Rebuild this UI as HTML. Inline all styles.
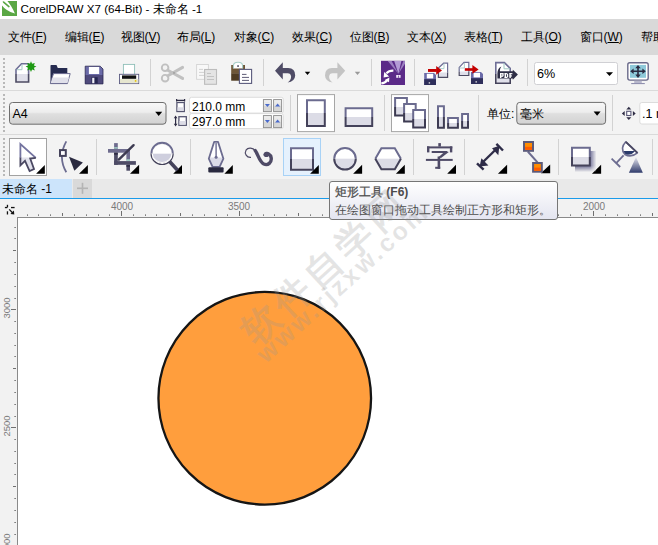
<!DOCTYPE html>
<html><head><meta charset="utf-8">
<style>
*{box-sizing:border-box}
html,body{margin:0;padding:0;width:658px;height:545px;overflow:hidden;background:#fff;font-family:"Liberation Sans",sans-serif}
.a{position:absolute}
.t{position:absolute;white-space:nowrap;font-size:12px;line-height:14px;color:#000}
.grip{position:absolute;width:2px;background:repeating-linear-gradient(to bottom,#b8b8b8 0 2px,transparent 2px 4px)}
.rn{position:absolute;white-space:nowrap;font-size:10px;line-height:10px;color:#7a7a7a}
u{text-decoration:underline;text-underline-offset:1px}
svg{position:absolute;left:0;top:0}
</style></head><body>
<!-- backgrounds -->
<div class="a" style="left:0;top:0;width:658px;height:19px;background:#fff"></div>
<div class="a" style="left:0;top:19px;width:658px;height:36px;background:#d9d9d9"></div>
<div class="a" style="left:0;top:55px;width:658px;height:35px;background:#f3f3f3"></div>
<div class="a" style="left:0;top:90px;width:658px;height:1px;background:#dadada"></div>
<div class="a" style="left:0;top:91px;width:658px;height:43px;background:#f3f3f3"></div>
<div class="a" style="left:0;top:134px;width:658px;height:1px;background:#dadada"></div>
<div class="a" style="left:0;top:135px;width:658px;height:44px;background:#f3f3f3"></div>
<div class="a" style="left:0;top:179px;width:658px;height:19px;background:#e9e9e9"></div>
<div class="a" style="left:0;top:179px;width:72px;height:19px;background:#cce4fb"></div>
<div class="a" style="left:73px;top:179px;width:19px;height:19px;background:#d9d9d9"></div>
<div class="a" style="left:0;top:198px;width:658px;height:1px;background:#1a9bea"></div>
<div class="a" style="left:0;top:199px;width:658px;height:346px;background:#f2f2f2"></div>
<div class="a" style="left:17px;top:217px;width:641px;height:328px;background:#fff;border-left:1px solid #8a8a8a;border-top:1px solid #8a8a8a"></div>
<div class="grip" style="left:3px;top:58px;height:30px"></div>
<div class="grip" style="left:3px;top:94px;height:38px"></div>
<div class="grip" style="left:3px;top:138px;height:38px"></div>
<svg width="658" height="545" viewBox="0 0 658 545">
<!-- grip handled in html -->
<!-- separators tb1 -->
<g fill="#d2d2d2">
<rect x="150" y="59" width="1" height="27"/>
<rect x="263" y="59" width="1" height="27"/>
<rect x="371" y="59" width="1" height="27"/>
<rect x="414" y="59" width="1" height="27"/>
<rect x="527" y="59" width="1" height="27"/>
</g>
<!-- new doc -->
<path d="M21.5,63.8 H28.6 V82 H16 V69.5 Z" fill="#fff"/>
<rect x="16" y="74" width="12.6" height="8" fill="#e0e0ea"/>
<path d="M16,74 V69.5 L21.5,63.8 H28.6 V74" fill="none" stroke="#6e6e96" stroke-width="1.6"/>
<path d="M16,74 V82 H28.6 V74" fill="none" stroke="#4d4b63" stroke-width="1.6"/>
<path d="M16.8,69.7 H22 V64.5" fill="none" stroke="#a6cbc6" stroke-width="1"/>
<polygon points="31,61.2 32.1,63.8 34.8,62.9 33.9,65.6 36.4,66.6 33.9,67.8 34.8,70.4 32.1,69.5 31,72 29.9,69.5 27.2,70.4 28.1,67.8 25.6,66.6 28.1,65.6 27.2,62.9 29.9,63.8" fill="#1f9a14"/>
<!-- open folder -->
<path d="M50.5,83.8 V65.5 Q50.5,64.9 51.2,64.9 H56.5 L57.8,67.9 H67.3 V83.8 Z" fill="#262b50"/>
<path d="M53.5,73.6 H70.2 L67.4,83.6 H50.3 Z" fill="#fff" stroke="#6a6a90" stroke-width="1"/>
<path d="M52.6,77.5 H69.1 L67.4,83.1 H51 Z" fill="#e0e0ea"/>
<!-- save -->
<path d="M85.2,66.2 H100.2 L103,69 V83.9 H85.2 Z" fill="#6a6aa8"/>
<rect x="85.2" y="75" width="17.8" height="8.9" fill="#4f4a7c"/>
<path d="M85.2,66.2 H100.2 L103,69 V83.9 H85.2 Z" fill="none" stroke="#2c2a52" stroke-width="0.8"/>
<rect x="88.9" y="67" width="10.3" height="7" fill="#fff"/>
<rect x="91.5" y="77.2" width="6.2" height="6.4" fill="#262650"/>
<rect x="92.2" y="77.8" width="2.2" height="5.4" fill="#f0f0f8"/>
<!-- print -->
<rect x="123.4" y="64.4" width="11.2" height="11.6" fill="#fff" stroke="#8fbfb8" stroke-width="0.9"/>
<rect x="119.5" y="74.3" width="19.2" height="9.3" fill="#fff" stroke="#5a5a80" stroke-width="0.9"/>
<rect x="122" y="75.4" width="14.2" height="3.4" fill="#111"/>
<rect x="120" y="79" width="18.3" height="4.2" fill="#e6e6cf"/>
<circle cx="135.6" cy="80.9" r="0.9" fill="#e8c000"/>
<!-- scissors -->
<g fill="none" stroke="#c0c0c0">
<circle cx="165.1" cy="67.7" r="3.3" stroke-width="1.9"/>
<circle cx="165.1" cy="78.2" r="3.3" stroke-width="1.9"/>
<path d="M167.8,70.2 L182.6,78.4 M167.8,75.7 L182.6,67.4" stroke-width="3" stroke-linecap="round"/>
</g>
<circle cx="174" cy="72.9" r="0.9" fill="#9a9a9a"/>
<!-- copy -->
<rect x="196.6" y="64.5" width="11.8" height="14.8" fill="#f8f8f8" stroke="#d4d4d4" stroke-width="0.9"/>
<g stroke="#cdcdcd" stroke-width="0.9"><path d="M199,69.4 H203 M199,72.4 H204 M199,75.4 H204"/></g>
<rect x="204.6" y="69.5" width="11.9" height="14.8" fill="#e4e4e4" stroke="#bcbcbc" stroke-width="1.1"/>
<g stroke="#bdbdbd" stroke-width="0.9"><path d="M207,73.5 H211 M207,76.5 H214 M207,79.5 H214"/></g>
<!-- paste -->
<rect x="231.2" y="65" width="13.8" height="8.8" fill="#6e5637"/>
<rect x="231.2" y="73.5" width="13.8" height="7.2" fill="#4f3b22"/>
<path d="M233.4,68.4 V65.8 Q233.4,62.3 238,62.3 Q242.6,62.3 242.6,65.8 V68.4 Z" fill="#fff"/>
<path d="M233.4,68.4 V65.8 Q233.4,62.3 238,62.3 Q242.6,62.3 242.6,65.8 V68.4" fill="none" stroke="#a8cfc8" stroke-width="1.1"/>
<rect x="237.3" y="65.3" width="1.5" height="1.5" fill="#2a2a44"/>
<rect x="239.4" y="69.4" width="12.2" height="14" fill="#fff" stroke="#5a5a7c" stroke-width="1.1"/>
<g stroke="#4d4b66" stroke-width="0.9"><path d="M242,74.4 H246.5 M242,77.4 H249 M242,80.4 H249"/></g>
<!-- undo -->
<path d="M275,70.8 L282.8,62.3 V68 H288.2 Q295.2,68.2 295.2,75.4 Q295,81.2 287.6,82.6 Q291.2,80 291.1,76.6 Q290.8,73.2 287.6,73.2 H282.8 V79.4 Z" fill="#4f4c66"/>
<polygon points="304.8,71.8 310.2,71.8 307.5,75" fill="#000"/>
<!-- redo -->
<path d="M345.2,70.8 L337.4,62.3 V68 H332 Q325,68.2 325,75.4 Q325.2,81.2 332.6,82.6 Q329,80 329.1,76.6 Q329.4,73.2 332.6,73.2 H337.4 V79.4 Z" fill="#c4c4c4"/>
<polygon points="354.8,71.8 360.2,71.8 357.5,75" fill="#999"/>
<!-- connect -->
<rect x="381" y="60.8" width="24" height="24.2" fill="#5b2a88"/>
<polygon points="387.8,61 391.6,61 398.4,73.8" fill="#9c80c2"/>
<polygon points="394.2,61 401.4,61 398.4,73.8" fill="#b39bd5"/>
<polygon points="403.4,61 405,61 405,63.8 398.4,73.8" fill="#9c80c2"/>
<rect x="396.2" y="75" width="4.4" height="2.8" fill="#f0e8f8"/>
<rect x="398.1" y="75.6" width="0.7" height="2.2" fill="#5b2a88"/>
<path d="M393.4,70.6 Q389,70.4 386.4,73.4" fill="none" stroke="#fff" stroke-width="2.2"/>
<polygon points="383.6,77.4 384.2,72 389.2,76.6" fill="#fff"/>
<path d="M381.3,83.4 Q385,83.2 387,80.4" fill="none" stroke="#fff" stroke-width="2.2"/>
<polygon points="389.4,77.4 384.8,80 389,82.2" fill="#fff"/>
<!-- import -->
<path d="M438.4,68 L443.6,63.2 H447.6 V77.3 H438.4 Z" fill="#fff"/>
<rect x="438.6" y="72.5" width="8.8" height="4.6" fill="#e0e0ea"/>
<path d="M438.4,72.5 V68 L443.6,63.2 H447.6 V72.5" fill="none" stroke="#6e6e96" stroke-width="1.2"/>
<path d="M438.4,72.5 V77.3 H447.6 V72.5" fill="none" stroke="#4d4b63" stroke-width="1.2"/>
<path d="M438.8,68.6 H444 V63.6" fill="none" stroke="#a6cbc6" stroke-width="0.9"/>
<path d="M424.2,73 H434 L436,75 V85 H424.2 Z" fill="#6a6aa8"/>
<rect x="424.2" y="79.2" width="11.8" height="5.8" fill="#2e2e5a"/>
<rect x="426.8" y="73.8" width="6.4" height="4.6" fill="#fff"/>
<rect x="428.7" y="82.2" width="1.4" height="1.4" fill="#ddd"/>
<rect x="428" y="69" width="8.8" height="2.9" fill="#c40000"/>
<polygon points="436.2,66 442,70.4 436.2,74.8" fill="#c40000"/>
<!-- export -->
<path d="M459.2,67.4 L464,62.3 H468.8 V75.5 H459.2 Z" fill="#fff"/>
<rect x="459.4" y="71.5" width="9.2" height="3.8" fill="#e0e0ea"/>
<path d="M459.2,71.5 V67.4 L464,62.3 H468.8 V71.5" fill="none" stroke="#6e6e96" stroke-width="1.2"/>
<path d="M459.2,71.5 V75.5 H468.8 V71.5" fill="none" stroke="#4d4b63" stroke-width="1.2"/>
<path d="M459.6,68 H464.4 V62.8" fill="none" stroke="#a6cbc6" stroke-width="0.9"/>
<path d="M471,72 H481 L483,74 V84 H471 Z" fill="#6a6aa8"/>
<rect x="471" y="78.2" width="12" height="5.8" fill="#2e2e5a"/>
<rect x="473.6" y="72.8" width="6.4" height="4.6" fill="#fff"/>
<rect x="475.5" y="81.2" width="1.4" height="1.4" fill="#ddd"/>
<rect x="464.8" y="68.2" width="8.2" height="2.6" fill="#c40000"/>
<polygon points="472.4,64.9 478.6,69.5 472.4,73.8" fill="#c40000"/>
<!-- pdf -->
<path d="M495.8,62.6 H504.4 L510,68.2 V83.2 H495.8 Z" fill="#fff"/>
<rect x="496.6" y="78.5" width="12.6" height="4.2" fill="#e0e0ea"/>
<path d="M495.8,74 V62.6 H504.4 L510.2,68.4 V74" fill="none" stroke="#6e6e96" stroke-width="1.6"/>
<path d="M495.8,74 V83.2 H510.2 V74" fill="none" stroke="#44425a" stroke-width="1.6"/>
<path d="M504,63 V68.8 H509.8" fill="none" stroke="#9ec8c0" stroke-width="1"/>
<path d="M497.4,78.6 V73.2 Q497.6,68.2 501.4,66.4 Q499.6,68.8 500,71.2 H512.8 V69.8 L517.9,74.6 L512.8,79.7 V78.4 H499.2 Q497.4,78.4 497.4,78.6 Z" fill="#2d2d45"/>
<g fill="#fff">
<rect x="500" y="73.1" width="1.4" height="4.9"/><rect x="500" y="73.1" width="3.2" height="1.2"/><rect x="502.3" y="73.1" width="1.3" height="3"/><rect x="500" y="75.6" width="3.2" height="1.2"/>
<rect x="504.6" y="73.1" width="1.4" height="4.9"/><rect x="504.6" y="73.1" width="2.6" height="1.2"/><rect x="504.6" y="76.8" width="2.6" height="1.2"/><rect x="506.9" y="73.7" width="1.3" height="3.7"/>
<rect x="509.4" y="73.1" width="1.4" height="4.9"/><rect x="509.4" y="73.1" width="3" height="1.2"/><rect x="509.4" y="75.4" width="2.6" height="1.1"/>
</g>
<!-- zoom combo -->
<rect x="534.5" y="62.5" width="83" height="22" rx="2" fill="#fff" stroke="#d0d0d4" stroke-width="1"/>
<polygon points="606,72.2 613,72.2 609.5,76" fill="#000"/>
<!-- fullscreen -->
<rect x="627.8" y="62.7" width="20.4" height="17.4" rx="2" fill="#fff" stroke="#6a6a8a" stroke-width="1.4"/>
<rect x="630" y="64.9" width="16" height="12.9" fill="#8ec9d9"/>
<g stroke="#2a2a40" stroke-width="1.6"><path d="M632,71.3 H644 M638,66.5 V76.2"/></g>
<g fill="#2a2a40">
<polygon points="630.2,71.3 633.6,68.6 633.6,74"/>
<polygon points="645.8,71.3 642.4,68.6 642.4,74"/>
<polygon points="638,64.9 635.3,68.3 640.7,68.3"/>
<polygon points="638,77.9 635.3,74.5 640.7,74.5"/>
</g>
<rect x="634.2" y="80.8" width="7.6" height="2.3" fill="#b8b8cc"/>
<rect x="631.2" y="83.1" width="13.6" height="1" fill="#8686a8"/>

<defs>
<linearGradient id="cmb" x1="0" y1="0" x2="0" y2="1">
<stop offset="0" stop-color="#f8f8f8"/><stop offset="0.45" stop-color="#ededed"/><stop offset="0.52" stop-color="#dfdfdf"/><stop offset="1" stop-color="#d2d2d2"/>
</linearGradient>
<linearGradient id="spin" x1="0" y1="0" x2="0" y2="1">
<stop offset="0" stop-color="#f0f0f0"/><stop offset="0.55" stop-color="#e2e2e2"/><stop offset="0.56" stop-color="#d6d6d6"/><stop offset="1" stop-color="#d6d6d6"/>
</linearGradient>
</defs>
<!-- A4 combo -->
<rect x="9.5" y="102.5" width="156.5" height="21.7" rx="3" fill="url(#cmb)" stroke="#6e6e6e" stroke-width="1"/>
<polygon points="155.2,111.8 162.2,111.8 158.7,116" fill="#000"/>
<!-- width/height icons -->
<rect x="176.9" y="102.5" width="7.4" height="9" fill="#fff" stroke="#555570" stroke-width="1.3"/>
<rect x="177.5" y="107.3" width="6.2" height="3.6" fill="#dcdce6"/>
<path d="M176.6,100.3 H184.6 M176.6,99 V101.6 M184.6,99 V101.6" stroke="#2e2c44" stroke-width="1.2"/>
<rect x="178.9" y="116.7" width="7.4" height="8.6" fill="#fff" stroke="#555570" stroke-width="1.3"/>
<rect x="179.5" y="121" width="6.2" height="3.7" fill="#dcdce6"/>
<path d="M175.6,117.5 V124.5" stroke="#2e2c44" stroke-width="1.2"/>
<polygon points="175.6,115.6 173.8,118.2 177.4,118.2" fill="#2e2c44"/>
<polygon points="175.6,126.4 173.8,123.8 177.4,123.8" fill="#2e2c44"/>
<!-- fields -->
<rect x="189.5" y="97.3" width="93.8" height="15.8" rx="2" fill="#fff" stroke="#dcdcdc" stroke-width="1"/>
<rect x="189.5" y="113.6" width="93.8" height="15" rx="2" fill="#fff" stroke="#dcdcdc" stroke-width="1"/>
<g stroke="#8c8c8c" stroke-width="0.9" fill="url(#spin)">
<rect x="263.4" y="99.6" width="8" height="12"/>
<rect x="273.6" y="99.6" width="8" height="12"/>
<rect x="263.4" y="115.6" width="8" height="12"/>
<rect x="273.6" y="115.6" width="8" height="12"/>
</g>
<g fill="#4a6acb">
<polygon points="264.9,104 269.9,104 267.4,107"/>
<polygon points="275.1,106.6 280.1,106.6 277.6,103.6"/>
<polygon points="264.9,120 269.9,120 267.4,123"/>
<polygon points="275.1,122.6 280.1,122.6 277.6,119.6"/>
</g>
<!-- separators -->
<g fill="#d2d2d2">
<rect x="290" y="95" width="1" height="36"/>
<rect x="384" y="95" width="1" height="36"/>
<rect x="478" y="95" width="1" height="36"/>
<rect x="612" y="95" width="1" height="36"/>
</g>
<!-- portrait button -->
<rect x="297.5" y="94.6" width="37" height="37" fill="#fff" stroke="#a6a6a6" stroke-width="1"/>
<rect x="307" y="100.3" width="17.8" height="25.6" fill="#fff"/>
<rect x="307" y="113" width="17.8" height="12.9" fill="#dcdce6"/>
<path d="M307,113 V100.3 H324.8 V113" fill="none" stroke="#6b6b8f" stroke-width="2"/>
<path d="M307,113 V125.9 H324.8 V113" fill="none" stroke="#44425a" stroke-width="2"/>
<!-- landscape -->
<rect x="345.6" y="108.2" width="26.6" height="17.7" fill="#fff"/>
<rect x="345.6" y="117" width="26.6" height="8.9" fill="#dcdce6"/>
<path d="M345.6,117 V108.2 H372.2 V117" fill="none" stroke="#6b6b8f" stroke-width="2"/>
<path d="M345.6,117 V125.9 H372.2 V117" fill="none" stroke="#44425a" stroke-width="2"/>
<!-- all pages button -->
<rect x="391.5" y="94.6" width="37" height="37" fill="#fff" stroke="#a6a6a6" stroke-width="1"/>
<g>
<rect x="395.1" y="98.1" width="11.8" height="17.5" fill="#fff"/>
<rect x="395.1" y="107" width="11.8" height="8.6" fill="#dcdce6"/>
<path d="M395.1,107 V98.1 H406.9 V107" fill="none" stroke="#6b6b8f" stroke-width="2"/>
<path d="M395.1,107 V115.6 H406.9 V107" fill="none" stroke="#3d3b52" stroke-width="2"/>
</g>
<g>
<rect x="404.1" y="104" width="11.6" height="17.6" fill="#fff"/>
<rect x="404.1" y="113" width="11.6" height="8.6" fill="#dcdce6"/>
<path d="M404.1,113 V104 H415.7 V113" fill="none" stroke="#6b6b8f" stroke-width="2"/>
<path d="M404.1,113 V121.6 H415.7 V113" fill="none" stroke="#3d3b52" stroke-width="2"/>
</g>
<g>
<rect x="413.2" y="110" width="11.8" height="17.5" fill="#fff"/>
<rect x="413.2" y="119" width="11.8" height="8.5" fill="#dcdce6"/>
<path d="M413.2,119 V110 H425 V119" fill="none" stroke="#6b6b8f" stroke-width="2"/>
<path d="M413.2,119 V127.5 H425 V119" fill="none" stroke="#3d3b52" stroke-width="2"/>
</g>
<!-- current page bars -->
<g>
<rect x="438" y="106.2" width="5.9" height="21.5" fill="#fff"/>
<rect x="438" y="117" width="5.9" height="10.7" fill="#dcdce6"/>
<path d="M438,117 V106.2 H443.9 V117" fill="none" stroke="#6b6b8f" stroke-width="2"/>
<path d="M438,117 V127.7 H443.9 V117" fill="none" stroke="#3d3b52" stroke-width="2"/>
<rect x="448.1" y="118.1" width="9.8" height="9.6" fill="#fff"/>
<rect x="448.1" y="123" width="9.8" height="4.7" fill="#dcdce6"/>
<path d="M448.1,123 V118.1 H457.9 V123" fill="none" stroke="#6b6b8f" stroke-width="2"/>
<path d="M448.1,123 V127.7 H457.9 V123" fill="none" stroke="#3d3b52" stroke-width="2"/>
<rect x="462.1" y="114.1" width="5.9" height="13.6" fill="#fff"/>
<rect x="462.1" y="121" width="5.9" height="6.7" fill="#dcdce6"/>
<path d="M462.1,121 V114.1 H468 V121" fill="none" stroke="#6b6b8f" stroke-width="2"/>
<path d="M462.1,121 V127.7 H468 V121" fill="none" stroke="#3d3b52" stroke-width="2"/>
</g>
<!-- units combo -->
<rect x="516.8" y="102.4" width="88.8" height="21.8" rx="3" fill="url(#cmb)" stroke="#6e6e6e" stroke-width="1"/>
<polygon points="593.6,111.6 600.6,111.6 597.1,115.8" fill="#000"/>
<!-- nudge -->
<g fill="#2e2c44">
<polygon points="628.8,106.8 626.3,109.6 631.3,109.6"/>
<polygon points="628.8,120 626.3,117.2 631.3,117.2"/>
<polygon points="621.9,113.4 624.7,110.9 624.7,115.9"/>
<polygon points="635.7,113.4 632.9,110.9 632.9,115.9"/>
</g>
<rect x="626.7" y="111.3" width="4.2" height="4.2" fill="#fff" stroke="#5a5878" stroke-width="1.1"/>
<rect x="639.8" y="102.5" width="30" height="21.5" rx="2" fill="#fff" stroke="#dcdcdc" stroke-width="1"/>

<defs>
<linearGradient id="shd" x1="0" y1="0" x2="1" y2="0">
<stop offset="0" stop-color="#6a6a8e"/><stop offset="0.7" stop-color="#74749a"/><stop offset="1" stop-color="#f0f0f2"/>
</linearGradient>
<linearGradient id="gv" x1="0" y1="0" x2="0" y2="1">
<stop offset="0" stop-color="#fff"/><stop offset="0.7" stop-color="#fff"/><stop offset="1" stop-color="#000"/>
</linearGradient>
<mask id="mv" maskUnits="userSpaceOnUse" x="570" y="145" width="30" height="30"><rect x="575" y="150.8" width="21.3" height="21.3" fill="url(#gv)"/></mask>
<linearGradient id="pour" x1="0" y1="0" x2="0" y2="1">
<stop offset="0" stop-color="#e8e8f0"/><stop offset="1" stop-color="#2e3a6a"/>
</linearGradient>
</defs>
<!-- separators -->
<g fill="#d2d2d2">
<rect x="96" y="139" width="1" height="36"/>
<rect x="190" y="139" width="1" height="36"/>
<rect x="413" y="139" width="1" height="36"/>
<rect x="464" y="139" width="1" height="36"/>
<rect x="558" y="139" width="1" height="36"/>
<rect x="652" y="139" width="1" height="36"/>
</g>
<!-- select frame -->
<rect x="9.5" y="138.5" width="37" height="37" fill="#fff" stroke="#a2a2a2" stroke-width="1"/>
<path d="M20.4,144 L35.8,157.8 L30.2,158.6 L34,169 L29.6,171 L25,160.8 L20.4,165.4 Z" fill="#fff"/>
<path d="M20.4,157.6 V165.4 L25,160.8 L29.6,171 L34,169 L30.2,158.6 L35.8,157.8 L35.6,157.6 Z" fill="#e2e2ec"/>
<path d="M20.4,157.8 V144 L35.8,157.8" fill="none" stroke="#7474a0" stroke-width="1.8"/>
<path d="M20.4,157.6 V165.4 L25,160.8 L29.6,171 L34,169 L30.2,158.6 L35.8,157.8" fill="none" stroke="#4a4862" stroke-width="1.8"/>
<!-- corner triangles -->
<g fill="#000">
<polygon points="36.1,173.8 44.8,173.8 44.8,165"/>
<polygon points="79,173.8 87.9,173.8 87.9,165"/>
<polygon points="130,173.8 139.1,173.8 139.1,164.8"/>
<polygon points="173.2,173.8 182,173.8 182,165"/>
<polygon points="224.4,173.8 232.8,173.8 232.8,165"/>
<polygon points="310.1,173.8 318.8,173.8 318.8,165"/>
<polygon points="353.1,173.8 362.1,173.8 362.1,164.8"/>
<polygon points="395.9,173.8 404.8,173.8 404.8,164.8"/>
<polygon points="447.2,173.8 456,173.8 456,164.8"/>
<polygon points="497.9,173.8 507.1,173.8 507.1,164.8"/>
<polygon points="540.8,173.3 550.2,173.3 550.2,164.5"/>
<polygon points="591.9,173.8 601.1,173.8 601.1,164.8"/>
</g>
<!-- shape tool -->
<path d="M66.3,141.4 Q62,149 61.9,157 Q62,165 66.3,172.2" fill="none" stroke="#6c6c90" stroke-width="1.8"/>
<rect x="60" y="150.1" width="5.8" height="5.8" fill="#fff" stroke="#44425a" stroke-width="2"/>
<polygon points="69,156.8 82.9,162.6 74.4,170.7" fill="#2a2a40"/>
<!-- crop -->
<rect x="114.1" y="143.1" width="3.7" height="6" fill="#6e6c8e"/>
<rect x="114.1" y="147.2" width="3.7" height="1.4" fill="#a6d4c8"/>
<rect x="108" y="149" width="22" height="3.7" fill="#6e6c8e"/>
<rect x="126.4" y="149" width="3.6" height="11.5" fill="#6e6c8e"/>
<rect x="126.4" y="159.3" width="3.6" height="1.6" fill="#a6d4c8"/>
<rect x="114.1" y="152.7" width="3.7" height="12.1" fill="#4e4c66"/>
<rect x="114.1" y="152.7" width="3.7" height="2" fill="#2e2c44"/>
<rect x="114.1" y="161.1" width="21.8" height="3.7" fill="#4e4c66"/>
<rect x="126.4" y="164.8" width="3.6" height="5.9" fill="#4e4c66"/>
<rect x="126.4" y="164.8" width="3.6" height="2" fill="#2e2c44"/>
<path d="M118.8,159.6 L133.6,145.2" stroke="#3d3b52" stroke-width="2.4" stroke-linecap="round"/>
<!-- zoom -->
<path d="M152.2,153.4 A10,10 0 0 0 172,153.4 Z" fill="#cfcfde"/>
<path d="M152.2,153.4 A10,10 0 0 1 172,153.4" fill="#fff"/>
<path d="M151.4,153.4 A10.7,10.7 0 0 1 172.8,153.4" fill="none" stroke="#6c6c90" stroke-width="1.9"/>
<path d="M151.4,153.4 A10.7,10.7 0 0 0 172.8,153.4" fill="none" stroke="#44425a" stroke-width="1.9"/>
<path d="M152.2,153.4 A9.9,9.9 0 0 0 172,153.4" fill="none" stroke="#fff" stroke-width="1.3"/>
<path d="M169.6,161.5 L177.6,170.2" stroke="#44425a" stroke-width="3.6"/>
<!-- pen -->
<path d="M214.2,141.8 H218 L223.4,158.7 L219.6,166.8 H212.6 L208.8,158.7 Z" fill="#fff"/>
<path d="M209.5,157.5 H222.8 L219.6,166.8 H212.6 Z" fill="#dcdce8"/>
<path d="M214.2,141.8 H218 L223.4,158.7 L219.6,166.8 H212.6 L208.8,158.7 Z" fill="none" stroke="#6c6c90" stroke-width="1.8" stroke-linejoin="round"/>
<path d="M216.1,143 V157" stroke="#6c6c90" stroke-width="1.4"/>
<circle cx="216.1" cy="157.3" r="1.5" fill="#6c6c90"/>
<rect x="208.3" y="167.2" width="15.3" height="5.4" rx="1" fill="#2a2a40"/>
<!-- artistic media -->
<path d="M251,157.3 C246.5,157.8 244.2,153.2 246,150.2 C248,147.2 252.8,147.6 255.4,150.8" fill="none" stroke="#4e4a66" stroke-width="1.2"/>
<path d="M255.2,150.5 C258.2,154.5 259.2,161.5 263.8,164 C268,166 271.8,162.4 271.2,158 C270.6,154 267,152.4 265.2,154.6" fill="none" stroke="#4e4a66" stroke-width="3.4" stroke-linecap="round"/>
<circle cx="266.4" cy="154.4" r="2.6" fill="#4e4a66"/>
<!-- rect hover -->
<rect x="283.5" y="138.5" width="37" height="37" fill="#e5f1fd" stroke="#a8d2f6" stroke-width="1"/>
<rect x="291" y="148.2" width="22" height="21.5" fill="#fff"/>
<rect x="291" y="159" width="22" height="10.7" fill="#dcdce6"/>
<path d="M291,159 V148.2 H313 V159" fill="none" stroke="#6b6b8f" stroke-width="2"/>
<path d="M291,159 V169.7 H313 V159" fill="none" stroke="#44425a" stroke-width="2"/>
<polygon points="310.1,173.8 318.8,173.8 318.8,165" fill="#000"/>
<!-- ellipse -->
<path d="M334.2,158.8 A10.8,10.8 0 0 1 355.8,158.8 Z" fill="#fff"/>
<path d="M334.2,158.8 A10.8,10.8 0 0 0 355.8,158.8 Z" fill="#dcdce6"/>
<path d="M334.2,158.8 A10.8,10.8 0 0 1 355.8,158.8" fill="none" stroke="#6b6b8f" stroke-width="2"/>
<path d="M334.2,158.8 A10.8,10.8 0 0 0 355.8,158.8" fill="none" stroke="#44425a" stroke-width="2"/>
<!-- hexagon -->
<path d="M375.3,158.8 L381.4,148.3 H394.8 L400.9,158.8 Z" fill="#fff"/>
<path d="M375.3,158.8 L381.4,169.3 H394.8 L400.9,158.8 Z" fill="#dcdce6"/>
<path d="M375.3,158.8 L381.4,148.3 H394.8 L400.9,158.8" fill="none" stroke="#6b6b8f" stroke-width="2"/>
<path d="M375.3,158.8 L381.4,169.3 H394.8 L400.9,158.8" fill="none" stroke="#44425a" stroke-width="2"/>
<!-- text 字 -->
<g fill="#4e4a66">
<rect x="438.3" y="143.1" width="2.6" height="3.5"/>
<rect x="427" y="146.4" width="25.3" height="2"/>
<rect x="427" y="146.4" width="2.4" height="6"/>
<rect x="449.9" y="146.4" width="2.4" height="6"/>
<rect x="431.7" y="151" width="15.4" height="2"/>
<polygon points="445.5,151 448.8,152 441,158 438.4,157.2"/>
<rect x="425.9" y="158.9" width="26.8" height="2"/>
<rect x="437.6" y="156.5" width="2.6" height="12.3"/>
<rect x="435.2" y="166.8" width="5" height="2"/>
</g>
<!-- dimension -->
<g stroke="#2e2c48" stroke-width="2.4" stroke-linecap="butt">
<path d="M483.5,161.5 L495.8,149.5"/>
<path d="M496.4,143.9 L503,150.5"/>
<path d="M477,163.3 L483.6,169.6"/>
</g>
<g fill="#2e2c48">
<polygon points="492,148.3 499.4,145.8 498.3,155.2"/>
<polygon points="479.6,166.6 481.4,158.2 488.4,165.6"/>
</g>
<!-- connector -->
<path d="M527.8,151.5 L537.5,162.3" stroke="#6c6c90" stroke-width="2"/>
<rect x="524" y="142" width="9" height="8.8" fill="#ff8c00" stroke="#5c5a7a" stroke-width="2"/>
<rect x="525" y="146.8" width="7" height="3" fill="#ff5a00"/>
<rect x="533.1" y="163" width="8.7" height="8.7" fill="#ff8c00" stroke="#5c5a7a" stroke-width="2"/>
<rect x="534.1" y="167.6" width="6.7" height="3.1" fill="#ff5a00"/>
<!-- drop shadow -->
<rect x="575" y="150.8" width="21.3" height="21.3" fill="url(#shd)" mask="url(#mv)"/>
<rect x="572" y="147.8" width="17.8" height="17.8" fill="#fff"/>
<rect x="572" y="157" width="17.8" height="8.6" fill="#dcdce6"/>
<path d="M572,157 V147.8 H589.8 V157" fill="none" stroke="#6b6b8f" stroke-width="2"/>
<path d="M572,157 V165.6 H589.8 V157" fill="none" stroke="#44425a" stroke-width="2"/>
<!-- smart fill -->
<path d="M625.8,141.8 L637.4,152.8 Q631,158 625,154.5 Q619.5,148.5 625.8,141.8 Z" fill="#fff"/>
<path d="M623,150.9 H635 Q630.6,156.2 625,154.2 Q623.4,152.8 623,150.9 Z" fill="#2a3a6a"/>
<path d="M625.8,141.8 L637.4,152.8 Q631,158 625,154.5 Q619.5,148.5 625.8,141.8 Z" fill="none" stroke="#6c6c90" stroke-width="1.6" stroke-linejoin="round"/>
<path d="M625.8,141.8 L637.4,152.8" stroke="#4a4862" stroke-width="1.8"/>
<path d="M623.6,155.4 L616.2,163.2" stroke="#6c6c90" stroke-width="1.8"/>
<path d="M611.6,158.6 L620.2,167" stroke="#6c6c90" stroke-width="1.8"/>
<polygon points="636,157 628.9,172.8 642.8,172.8" fill="url(#pour)"/>

<rect x="27" y="214.5" width="1" height="1.2" fill="#505050"/>
<rect x="38" y="214.5" width="1" height="1.2" fill="#505050"/>
<rect x="50" y="214.5" width="1" height="1.2" fill="#505050"/>
<rect x="62" y="213" width="1" height="3" fill="#707070"/>
<rect x="74" y="214.5" width="1" height="1.2" fill="#505050"/>
<rect x="86" y="214.5" width="1" height="1.2" fill="#505050"/>
<rect x="98" y="214.5" width="1" height="1.2" fill="#505050"/>
<rect x="109" y="214.5" width="1" height="1.2" fill="#505050"/>
<rect x="121" y="211" width="1" height="5" fill="#707070"/>
<rect x="133" y="214.5" width="1" height="1.2" fill="#505050"/>
<rect x="145" y="214.5" width="1" height="1.2" fill="#505050"/>
<rect x="156" y="214.5" width="1" height="1.2" fill="#505050"/>
<rect x="168" y="214.5" width="1" height="1.2" fill="#505050"/>
<rect x="180" y="213" width="1" height="3" fill="#707070"/>
<rect x="192" y="214.5" width="1" height="1.2" fill="#505050"/>
<rect x="204" y="214.5" width="1" height="1.2" fill="#505050"/>
<rect x="216" y="214.5" width="1" height="1.2" fill="#505050"/>
<rect x="227" y="214.5" width="1" height="1.2" fill="#505050"/>
<rect x="239" y="211" width="1" height="5" fill="#707070"/>
<rect x="251" y="214.5" width="1" height="1.2" fill="#505050"/>
<rect x="263" y="214.5" width="1" height="1.2" fill="#505050"/>
<rect x="274" y="214.5" width="1" height="1.2" fill="#505050"/>
<rect x="286" y="214.5" width="1" height="1.2" fill="#505050"/>
<rect x="298" y="213" width="1" height="3" fill="#707070"/>
<rect x="310" y="214.5" width="1" height="1.2" fill="#505050"/>
<rect x="322" y="214.5" width="1" height="1.2" fill="#505050"/>
<rect x="334" y="214.5" width="1" height="1.2" fill="#505050"/>
<rect x="345" y="214.5" width="1" height="1.2" fill="#505050"/>
<rect x="357" y="211" width="1" height="5" fill="#707070"/>
<rect x="369" y="214.5" width="1" height="1.2" fill="#505050"/>
<rect x="381" y="214.5" width="1" height="1.2" fill="#505050"/>
<rect x="392" y="214.5" width="1" height="1.2" fill="#505050"/>
<rect x="404" y="214.5" width="1" height="1.2" fill="#505050"/>
<rect x="416" y="213" width="1" height="3" fill="#707070"/>
<rect x="428" y="214.5" width="1" height="1.2" fill="#505050"/>
<rect x="440" y="214.5" width="1" height="1.2" fill="#505050"/>
<rect x="452" y="214.5" width="1" height="1.2" fill="#505050"/>
<rect x="463" y="214.5" width="1" height="1.2" fill="#505050"/>
<rect x="475" y="211" width="1" height="5" fill="#707070"/>
<rect x="487" y="214.5" width="1" height="1.2" fill="#505050"/>
<rect x="499" y="214.5" width="1" height="1.2" fill="#505050"/>
<rect x="510" y="214.5" width="1" height="1.2" fill="#505050"/>
<rect x="522" y="214.5" width="1" height="1.2" fill="#505050"/>
<rect x="534" y="213" width="1" height="3" fill="#707070"/>
<rect x="546" y="214.5" width="1" height="1.2" fill="#505050"/>
<rect x="558" y="214.5" width="1" height="1.2" fill="#505050"/>
<rect x="570" y="214.5" width="1" height="1.2" fill="#505050"/>
<rect x="581" y="214.5" width="1" height="1.2" fill="#505050"/>
<rect x="593" y="211" width="1" height="5" fill="#707070"/>
<rect x="605" y="214.5" width="1" height="1.2" fill="#505050"/>
<rect x="617" y="214.5" width="1" height="1.2" fill="#505050"/>
<rect x="628" y="214.5" width="1" height="1.2" fill="#505050"/>
<rect x="640" y="214.5" width="1" height="1.2" fill="#505050"/>
<rect x="652" y="213" width="1" height="3" fill="#707070"/>
<rect x="14.5" y="227" width="1.2" height="1" fill="#505050"/>
<rect x="14.5" y="238" width="1.2" height="1" fill="#505050"/>
<rect x="13" y="250" width="3" height="1" fill="#707070"/>
<rect x="14.5" y="262" width="1.2" height="1" fill="#505050"/>
<rect x="14.5" y="274" width="1.2" height="1" fill="#505050"/>
<rect x="14.5" y="286" width="1.2" height="1" fill="#505050"/>
<rect x="14.5" y="298" width="1.2" height="1" fill="#505050"/>
<rect x="11" y="309" width="5" height="1" fill="#707070"/>
<rect x="14.5" y="321" width="1.2" height="1" fill="#505050"/>
<rect x="14.5" y="333" width="1.2" height="1" fill="#505050"/>
<rect x="14.5" y="345" width="1.2" height="1" fill="#505050"/>
<rect x="14.5" y="356" width="1.2" height="1" fill="#505050"/>
<rect x="13" y="368" width="3" height="1" fill="#707070"/>
<rect x="14.5" y="380" width="1.2" height="1" fill="#505050"/>
<rect x="14.5" y="392" width="1.2" height="1" fill="#505050"/>
<rect x="14.5" y="404" width="1.2" height="1" fill="#505050"/>
<rect x="14.5" y="416" width="1.2" height="1" fill="#505050"/>
<rect x="11" y="427" width="5" height="1" fill="#707070"/>
<rect x="14.5" y="439" width="1.2" height="1" fill="#505050"/>
<rect x="14.5" y="451" width="1.2" height="1" fill="#505050"/>
<rect x="14.5" y="463" width="1.2" height="1" fill="#505050"/>
<rect x="14.5" y="474" width="1.2" height="1" fill="#505050"/>
<rect x="13" y="486" width="3" height="1" fill="#707070"/>
<rect x="14.5" y="498" width="1.2" height="1" fill="#505050"/>
<rect x="14.5" y="510" width="1.2" height="1" fill="#505050"/>
<rect x="14.5" y="522" width="1.2" height="1" fill="#505050"/>
<rect x="14.5" y="534" width="1.2" height="1" fill="#505050"/>
<!-- logo -->
<rect x="2" y="1" width="15" height="15" fill="#5aa744"/>
<path d="M2.4,1 H7.4 Q11.5,5.5 14.9,13.6 Q10,12.3 6.5,9.8 Q3.5,7.8 2,5.6 V1.4 Z" fill="#fff"/>
<path d="M3.6,2.1 L8.9,6.6" stroke="#5aa744" stroke-width="1.6" stroke-linecap="round"/>
<!-- plus -->
<rect x="77" y="187.5" width="11" height="1.6" fill="#b4b4b4"/>
<rect x="81.7" y="182.8" width="1.6" height="11" fill="#b4b4b4"/>
<!-- ruler corner icon -->
<g fill="#111">
<rect x="6.8" y="204.8" width="1.3" height="2.6"/>
<rect x="6.8" y="211.3" width="1.3" height="3.2"/>
<rect x="4.9" y="206.9" width="2.4" height="1.3"/>
<rect x="11" y="206.9" width="3.6" height="1.3"/>
<path d="M9.2,209.4 L13,213.2" stroke="#111" stroke-width="1.3"/>
<polygon points="14.3,214.5 10.4,214.1 13.9,210.6"/>
</g>
<!-- circle -->
<circle cx="264.75" cy="398.25" r="106.3" fill="#ff9e3d" stroke="#151515" stroke-width="2.3"/>
</svg>
<!-- title -->
<div class="t" style="left:20.5px;top:2px;font-size:11.65px">CorelDRAW X7 (64-Bit) - 未命名 -1</div>
<!-- menu -->
<div class="t" style="left:7.5px;top:30px">文件(<u>F</u>)</div>
<div class="t" style="left:64.5px;top:30px">编辑(<u>E</u>)</div>
<div class="t" style="left:120.5px;top:30px">视图(<u>V</u>)</div>
<div class="t" style="left:176.5px;top:30px">布局(<u>L</u>)</div>
<div class="t" style="left:233.5px;top:30px">对象(<u>C</u>)</div>
<div class="t" style="left:291.5px;top:30px">效果(<u>C</u>)</div>
<div class="t" style="left:349.5px;top:30px">位图(<u>B</u>)</div>
<div class="t" style="left:406.5px;top:30px">文本(<u>X</u>)</div>
<div class="t" style="left:463.5px;top:30px">表格(<u>T</u>)</div>
<div class="t" style="left:520.5px;top:30px">工具(<u>O</u>)</div>
<div class="t" style="left:579.5px;top:30px">窗口(<u>W</u>)</div>
<div class="t" style="left:640.5px;top:30px">帮助</div>
<!-- toolbar texts -->
<div class="t" style="left:537px;top:67px;font-size:12.6px">6%</div>
<div class="t" style="left:12.5px;top:107px;font-size:12.5px">A4</div>
<div class="t" style="left:192px;top:99.5px;font-size:12px">210.0 mm</div>
<div class="t" style="left:192px;top:115px;font-size:12px">297.0 mm</div>
<div class="t" style="left:487px;top:107px">单位:</div>
<div class="t" style="left:520px;top:106.5px">毫米</div>
<div class="t" style="left:642px;top:107px;font-size:12.5px">.1 r</div>
<!-- tab -->
<div class="t" style="left:2px;top:182px">未命名 -1</div>
<!-- ruler numbers -->
<div class="rn" style="left:102px;top:202px;width:40px;text-align:center">4000</div>
<div class="rn" style="left:219px;top:202px;width:40px;text-align:center">3500</div>
<div class="rn" style="left:337px;top:202px;width:40px;text-align:center">3000</div>
<div class="rn" style="left:455px;top:202px;width:40px;text-align:center">2500</div>
<div class="rn" style="left:574px;top:202px;width:40px;text-align:center">2000</div>
<div class="rn" style="left:-13.5px;top:303px;width:40px;text-align:center;transform:rotate(-90deg);font-size:9.5px">3000</div>
<div class="rn" style="left:-13.5px;top:421px;width:40px;text-align:center;transform:rotate(-90deg);font-size:9.5px">2500</div>
<div class="rn" style="left:-13.5px;top:539px;width:40px;text-align:center;transform:rotate(-90deg);font-size:9.5px">2000</div>
<!-- tooltip -->
<div class="a" style="left:329px;top:181px;width:229px;height:39px;border:1px solid #767676;border-radius:3px;background:linear-gradient(#ffffff,#e4e5f0)"></div>
<div class="t" style="left:335px;top:184.5px;color:#4c4c4c"><span style="font-weight:500;-webkit-text-stroke:0.25px #4c4c4c">矩形工具</span> <b>(F6)</b></div>
<div class="t" style="left:335px;top:203px;color:#4c4c4c">在绘图窗口拖动工具绘制正方形和矩形。</div>
<svg width="658" height="545" viewBox="0 0 658 545" style="position:absolute;left:0;top:0">
<g transform="translate(260.8,325.5) rotate(-42.3)" fill="rgba(150,150,150,0.25)" font-family="Liberation Sans, sans-serif" font-weight="bold">
<text x="-17" y="12.2" font-size="37" letter-spacing="4.8">软件自学网</text>
<text x="-22" y="32" font-size="25" letter-spacing="3">www.rjzxw.com</text>
</g>
</svg>
</body></html>
